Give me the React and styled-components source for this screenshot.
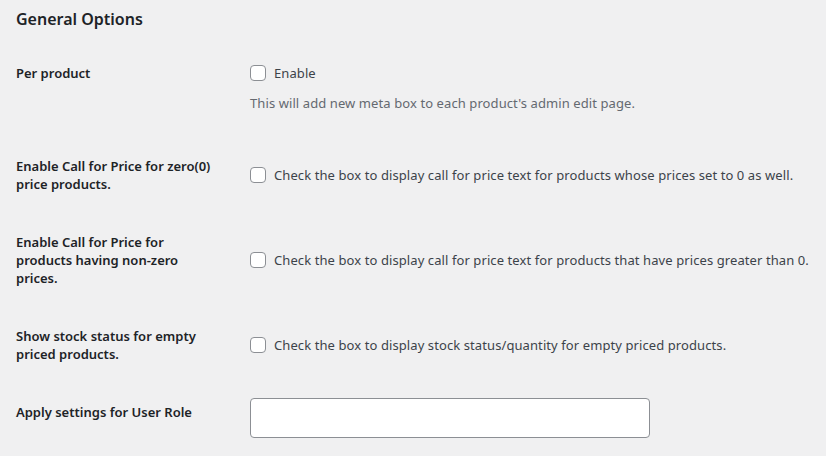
import React from 'react';
import styled, { createGlobalStyle } from 'styled-components';

const GlobalStyle = createGlobalStyle`
  html, body {
    margin: 0;
    padding: 0;
    background: #f0f0f1;
  }
  body {
    font-family: "Noto Sans", "Open Sans", "Liberation Sans", sans-serif;
    font-size: 13px;
    color: #1d2327;
  }
`;

const rows = [
  {
    label: 'Per product',
    control: 'Enable',
    description: "This will add new meta box to each product's admin edit page.",
    top: true,
  },
  {
    label: 'Enable Call for Price for zero(0) price products.',
    control: 'Check the box to display call for price text for products whose prices set to 0 as well.',
  },
  {
    label: 'Enable Call for Price for products having non-zero prices.',
    control: 'Check the box to display call for price text for products that have prices greater than 0.',
  },
  {
    label: 'Show stock status for empty priced products.',
    control: 'Check the box to display stock status/quantity for empty priced products.',
  },
];

const App = () => {
  return (
    <Wrap>
      <GlobalStyle />
      <Title>General Options</Title>
      <FormTable>
        {rows.map((row) => (
          <Row key={row.label}>
            <Label>{row.label}</Label>
            <Field $top={row.top}>
              <CheckLine>
                <Checkbox type="checkbox" />
                <span>{row.control}</span>
              </CheckLine>
              {row.description && <Description>{row.description}</Description>}
            </Field>
          </Row>
        ))}
        <Row>
          <Label>Apply settings for User Role</Label>
          <Field $input>
            <TextInput type="text" />
          </Field>
        </Row>
      </FormTable>
    </Wrap>
  );
};

export default App;

const Wrap = styled.div`
  padding: 8px 16px 0 16px;
`;

const Title = styled.h2`
  margin: 0 0 14px 0;
  font-size: 16px;
  line-height: 22px;
  font-weight: 600;
  color: #1d2327;
`;

const FormTable = styled.div`
  display: flex;
  flex-direction: column;
`;

const Row = styled.div`
  display: grid;
  grid-template-columns: 234px 1fr;
`;

const Label = styled.div`
  padding: 20px 0;
  max-width: 205px;
  font-weight: 600;
  line-height: 18px;
  color: #1d2327;
`;

const Field = styled.div`
  align-self: ${(p) => (p.$top ? 'start' : 'center')};
  padding: ${(p) => (p.$top ? '17px 0 25px 0' : p.$input ? '15px 0' : '0')};
  letter-spacing: 0.09px;
`;

const CheckLine = styled.label`
  display: flex;
  align-items: center;
  gap: 8px;
  height: 24px;
  line-height: 24px;
  color: #3c434a;
  white-space: nowrap;
`;

const Checkbox = styled.input`
  appearance: none;
  margin: 0;
  width: 16px;
  height: 16px;
  border: 1px solid #8c8f94;
  border-radius: 4px;
  background: #fff;
  box-sizing: border-box;
  flex-shrink: 0;
`;

const Description = styled.p`
  margin: 9px 0 0 0;
  line-height: 18px;
  color: #646970;
`;

const TextInput = styled.input`
  display: block;
  box-sizing: border-box;
  width: 400px;
  height: 40px;
  margin: 0;
  border: 1px solid #8c8f94;
  border-radius: 4px;
  background: #fff;
`;
